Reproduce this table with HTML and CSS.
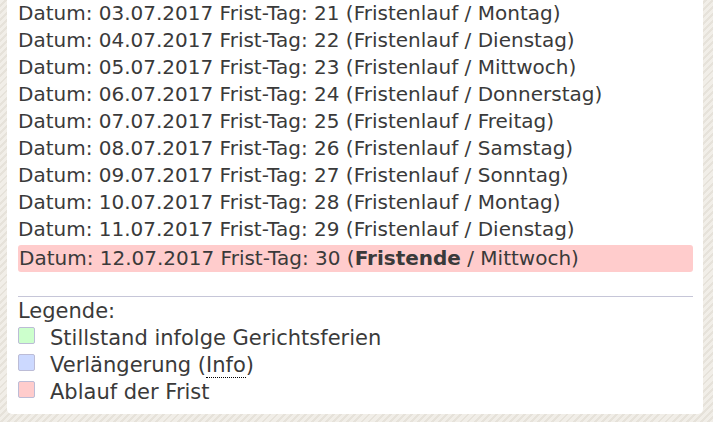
FILE: index.html
```html
<!DOCTYPE html>
<html lang="de">
<head>
<meta charset="utf-8">
<link rel="stylesheet" href="styles.css">
</head>
<body>
<div class="card">
  <div class="rows">
    <div class="row">Datum: 03.07.2017 Frist-Tag: 21 (Fristenlauf / Montag)</div>
    <div class="row">Datum: 04.07.2017 Frist-Tag: 22 (Fristenlauf / Dienstag)</div>
    <div class="row">Datum: 05.07.2017 Frist-Tag: 23 (Fristenlauf / Mittwoch)</div>
    <div class="row">Datum: 06.07.2017 Frist-Tag: 24 (Fristenlauf / Donnerstag)</div>
    <div class="row">Datum: 07.07.2017 Frist-Tag: 25 (Fristenlauf / Freitag)</div>
    <div class="row">Datum: 08.07.2017 Frist-Tag: 26 (Fristenlauf / Samstag)</div>
    <div class="row">Datum: 09.07.2017 Frist-Tag: 27 (Fristenlauf / Sonntag)</div>
    <div class="row">Datum: 10.07.2017 Frist-Tag: 28 (Fristenlauf / Montag)</div>
    <div class="row">Datum: 11.07.2017 Frist-Tag: 29 (Fristenlauf / Dienstag)</div>
    <div class="row row-end">Datum: 12.07.2017 Frist-Tag: 30 (<b>Fristende</b> / Mittwoch)</div>
  </div>
  <div class="legend">
    <div class="legend-title">Legende:</div>
    <div class="legend-item"><span class="swatch swatch-green"></span><span>Stillstand infolge Gerichtsferien</span></div>
    <div class="legend-item"><span class="swatch swatch-blue"></span><span>Verlängerung (<abbr class="info" title="Info">Info</abbr>)</span></div>
    <div class="legend-item"><span class="swatch swatch-red"></span><span>Ablauf der Frist</span></div>
  </div>
</div>
</body>
</html>
```

FILE: styles.css
```css
html, body {
  margin: 0;
  padding: 0;
}
body {
  width: 713px;
  height: 422px;
  overflow: hidden;
  background: repeating-linear-gradient(135deg, #f1eee8 0px, #f1eee8 3px, #e6e2da 3px, #e6e2da 5px);
  font-family: "DejaVu Sans", sans-serif;
  font-size: 20px;
  color: #3a3a3a;
}
.card {
  margin: 0 10px 0 7px;
  height: 414px;
  box-sizing: border-box;
  background: #fff;
  border-radius: 0 0 5px 5px;
  padding: 0 10px 0 11px;
}
.rows {
  padding-bottom: 24px;
  border-bottom: 1px solid #c6c6d8;
}
.row {
  line-height: 27px;
  height: 27px;
  white-space: nowrap;
}
.row-end {
  margin-top: 2px;
  background: #ffcccc;
  border-radius: 3px;
  padding-left: 1px;
}
.row-end b {
  font-weight: bold;
}
.legend {
  line-height: 27px;
  font-size: 21px;
  padding-top: 1px;
}
.legend-item {
  display: flex;
  align-items: flex-start;
}
.swatch {
  width: 15px;
  height: 15px;
  margin-top: 2px;
  margin-right: 15px;
  border: 1px solid #bcbcd6;
  border-radius: 2px;
  flex: none;
}
.swatch-green { background: #ccffcc; }
.swatch-blue { background: #ccd9ff; }
.swatch-red { background: #ffcccc; }
.info {
  text-decoration: none;
  border-bottom: 1px dotted #000;
}
```
